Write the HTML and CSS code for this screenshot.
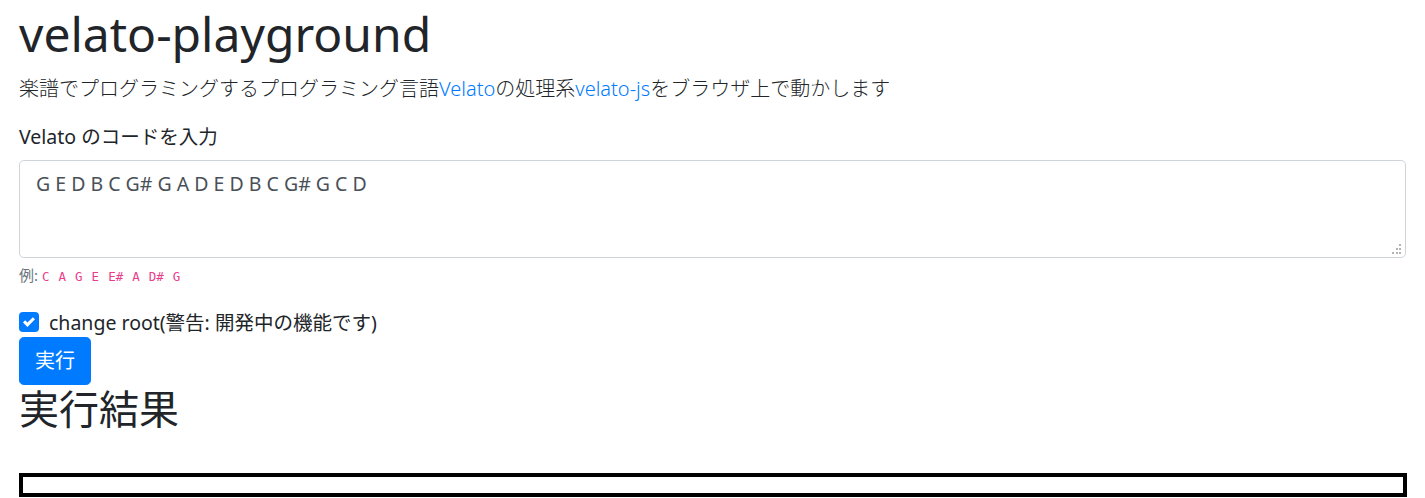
FILE: index.html
```html
<!DOCTYPE html>
<html lang="ja">
<head>
<meta charset="utf-8">
<title>velato-playground</title>
<link rel="stylesheet" href="styles.css">
</head>
<body>
<div class="container">
  <h1 class="title">velato-playground</h1>
  <p class="lead">楽譜でプログラミングするプログラミング言語<a href="#">Velato</a>の処理系<a href="#">velato-js</a>をブラウザ上で動かします</p>
  <div class="form-group">
    <label class="form-label" for="code">Velato のコードを入力</label>
    <div class="textarea-wrap">
      <textarea id="code" class="form-control">G E D B C G# G A D E D B C G# G C D</textarea>
      <svg class="grip" width="10" height="10" viewBox="0 0 10 10"><g fill="#b3b3b3"><rect x="8" y="0" width="2" height="2"/><rect x="5" y="4" width="2" height="2"/><rect x="8" y="4" width="2" height="2"/><rect x="1" y="8" width="2" height="2"/><rect x="5" y="8" width="2" height="2"/><rect x="8" y="8" width="2" height="2"/></g></svg>
    </div>
    <small class="form-text">例: <code>C A G E E# A D# G</code></small>
  </div>
  <div class="check">
    <span class="check-box"><svg viewBox="0 0 8 8" width="12" height="12"><path fill="#fff" d="M6.564.75l-3.59 3.612-1.538-1.55L0 4.26l2.974 2.99L8 2.193z"/></svg></span>
    <span class="check-label">change root(警告: 開発中の機能です)</span>
  </div>
  <button class="btn">実行</button>
  <h1 class="result-title">実行結果</h1>
  <div class="output"></div>
</div>
</body>
</html>
```

FILE: styles.css
```css
html, body {
  margin: 0;
  padding: 0;
  background: #fff;
}
body {
  font-family: "Noto Sans", "Noto Sans CJK JP", sans-serif;
  color: #212529;
  font-size: 16px;
  line-height: 1.5;
}
.container {
  padding: 5px 19px 0 19px;
}
.title {
  font-size: 48px;
  font-weight: 400;
  line-height: 1.2;
  margin: 0 0 11px 0;
}
.lead {
  font-size: 20px;
  font-weight: 300;
  margin: 0 0 18px 0;
}
.lead a {
  color: #007bff;
  text-decoration: none;
}
.form-group {
  margin-bottom: 21px;
}
.form-label {
  display: block;
  font-size: 19.5px;
  margin-bottom: 9px;
}
.textarea-wrap {
  position: relative;
}
.form-control {
  display: block;
  box-sizing: border-box;
  width: 100%;
  height: 98px;
  padding: 8px 16px;
  font-family: inherit;
  font-size: 19.5px;
  line-height: 1.5;
  color: #495057;
  border: 1px solid #ced4da;
  border-radius: 4.8px;
  resize: none;
  margin: 0;
}
.grip {
  position: absolute;
  right: 5px;
  bottom: 4px;
}
.form-text {
  display: block;
  margin-top: 6px;
  font-size: 15px;
  color: #6c757d;
}
.form-text code {
  font-family: "DejaVu Sans Mono", monospace;
  font-size: 12.5px;
  color: #e83e8c;
  word-spacing: 1.5px;
}
.check {
  display: flex;
  align-items: center;
  gap: 10px;
  font-size: 19.5px;
}
.check-box {
  width: 20px;
  height: 20px;
  box-sizing: border-box;
  border-radius: 4px;
  background: #007bff;
  display: flex;
  align-items: center;
  justify-content: center;
}
.btn {
  display: block;
  font-family: inherit;
  font-size: 20px;
  line-height: 1.5;
  padding: 8px 15px;
  color: #fff;
  background: #007bff;
  border: 1px solid #007bff;
  border-radius: 4.8px;
  margin: 0;
}
.result-title {
  font-size: 40px;
  font-weight: 400;
  line-height: 1.2;
  margin: 0 0 40px 0;
}
.output {
  border: 4px solid #000;
  height: 16px;
  margin-right: -1px;
}
```
